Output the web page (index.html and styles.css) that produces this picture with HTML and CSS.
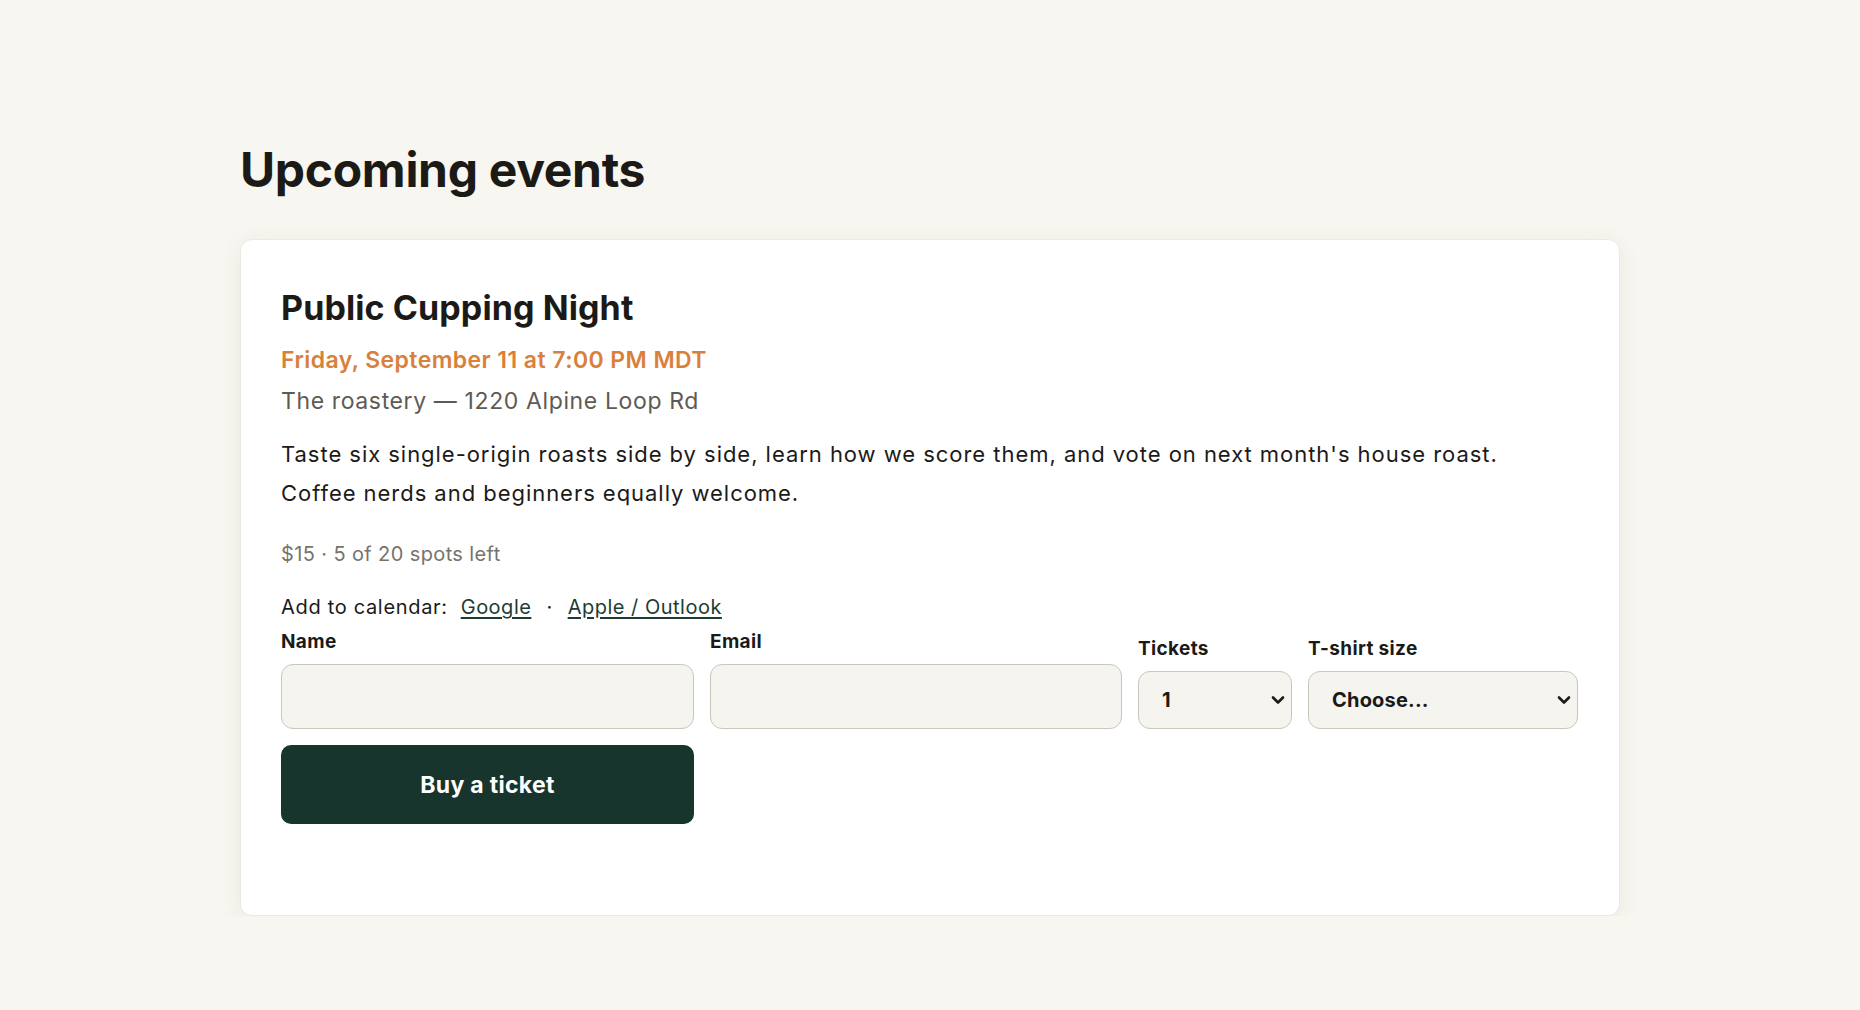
FILE: index.html
```html
<!DOCTYPE html>
<html lang="en">
<head>
<meta charset="utf-8">
<title>Upcoming events</title>
<link rel="stylesheet" href="styles.css">
</head>
<body>
<main class="page">
  <h1 class="page-title">Upcoming events</h1>
  <article class="event-card">
    <h2 class="event-title">Public Cupping Night</h2>
    <p class="event-date">Friday, September 11 at 7:00 PM MDT</p>
    <p class="event-place">The roastery — 1220 Alpine Loop Rd</p>
    <p class="event-desc">Taste six single-origin roasts side by side, learn how we score them, and vote on next month's house roast. Coffee nerds and beginners equally welcome.</p>
    <p class="event-meta">$15 · 5 of 20 spots left</p>
    <p class="calendar">
      <span class="cal-label">Add to calendar:</span>
      <a href="#" class="cal-link">Google</a>
      <span class="sep">·</span>
      <a href="#" class="cal-link">Apple / Outlook</a>
    </p>
    <form class="ticket-form">
      <label class="field">
        <span class="field-label">Name</span>
        <input class="text-input" type="text">
      </label>
      <label class="field">
        <span class="field-label">Email</span>
        <input class="text-input" type="email">
      </label>
      <label class="field">
        <span class="field-label">Tickets</span>
        <span class="select-wrap">
          <select class="select-input">
            <option>1</option>
            <option>2</option>
            <option>3</option>
          </select>
          <svg class="chevron" width="14" height="10" viewBox="0 0 14 10" aria-hidden="true"><path d="M2 2.5 L7 7.5 L12 2.5" fill="none" stroke="#1c1a17" stroke-width="2.6" stroke-linecap="round" stroke-linejoin="round"/></svg>
        </span>
      </label>
      <label class="field">
        <span class="field-label">T-shirt size</span>
        <span class="select-wrap">
          <select class="select-input">
            <option>Choose...</option>
            <option>S</option>
            <option>M</option>
            <option>L</option>
          </select>
          <svg class="chevron" width="14" height="10" viewBox="0 0 14 10" aria-hidden="true"><path d="M2 2.5 L7 7.5 L12 2.5" fill="none" stroke="#1c1a17" stroke-width="2.6" stroke-linecap="round" stroke-linejoin="round"/></svg>
        </span>
      </label>
      <button class="buy-btn" type="button">Buy a ticket</button>
    </form>
  </article>
</main>
</body>
</html>
```

FILE: styles.css
```css
* {
  box-sizing: border-box;
}

html, body {
  margin: 0;
  padding: 0;
}

body {
  background: #f7f6f0;
  font-family: Inter, "Liberation Sans", sans-serif;
  color: #1c1a17;
}

.page {
  width: 1380px;
  margin: 0 auto;
  padding-top: 141px;
}

.page-title {
  margin: 0 0 40px;
  font-size: 48px;
  line-height: 58px;
  font-weight: 700;
  letter-spacing: -0.3px;
  color: #1c1a17;
}

.event-card {
  background: #ffffff;
  border: 1px solid #ebe9e2;
  border-radius: 12px;
  box-shadow: 0 4px 22px rgba(60, 50, 30, 0.07);
  padding: 47px 40px 91px 40px;
}

.event-title {
  margin: 0;
  font-size: 34px;
  line-height: 41px;
  font-weight: 700;
  letter-spacing: 0.1px;
}

.event-date {
  margin: 17px 0 0;
  font-size: 23px;
  line-height: 30px;
  font-weight: 600;
  letter-spacing: 0.42px;
  color: #d9803a;
}

.event-place {
  margin: 11px 0 0;
  font-size: 23px;
  line-height: 30px;
  letter-spacing: 0.62px;
  color: #5e5b55;
}

.event-desc {
  margin: 19px 0 0;
  font-size: 22px;
  line-height: 39px;
  letter-spacing: 0.96px;
  color: #1c1a17;
  max-width: 1260px;
}

.event-meta {
  margin: 27px 0 0;
  font-size: 20px;
  line-height: 28px;
  letter-spacing: 0.38px;
  color: #77736c;
}

.calendar {
  margin: 25px 0 0;
  font-size: 20px;
  line-height: 28px;
  letter-spacing: 0.5px;
  display: flex;
  gap: 13px;
  color: #1c1a17;
}

.cal-label {
  letter-spacing: 0.68px;
}

.cal-link {
  color: #1d3d33;
  text-decoration: underline;
  text-underline-offset: 3px;
}

.sep {
  padding: 0 2px;
}

.ticket-form {
  margin-top: 8px;
  display: grid;
  grid-template-columns: 413px 412px 154px 270px;
  column-gap: 16px;
  row-gap: 16px;
  align-items: end;
}

.field {
  display: flex;
  flex-direction: column;
  gap: 10px;
}

.field-label {
  font-size: 19px;
  line-height: 25px;
  font-weight: 700;
  letter-spacing: 0.35px;
  color: #1c1a17;
}

.text-input {
  height: 65px;
  background: #f5f4ee;
  border: 1.5px solid #c9c6be;
  border-radius: 12px;
  font: inherit;
  font-size: 20px;
  padding: 0 18px;
}

.select-wrap {
  position: relative;
  display: block;
}

.select-input {
  appearance: none;
  -webkit-appearance: none;
  width: 100%;
  height: 58px;
  background-color: #f5f4ee;
  border: 1.5px solid #c9c6be;
  border-radius: 12px;
  font-family: Inter, "Liberation Sans", sans-serif;
  font-size: 20px;
  font-weight: 700;
  letter-spacing: 0.2px;
  color: #1c1a17;
  padding: 0 36px 0 23px;
}

.chevron {
  position: absolute;
  right: 7px;
  top: 24px;
  pointer-events: none;
}

.buy-btn {
  grid-column: 1;
  height: 79px;
  background: #17352c;
  color: #ffffff;
  border: none;
  border-radius: 10px;
  font-family: Inter, "Liberation Sans", sans-serif;
  font-size: 23px;
  font-weight: 700;
  letter-spacing: 0.3px;
  cursor: pointer;
}
```
